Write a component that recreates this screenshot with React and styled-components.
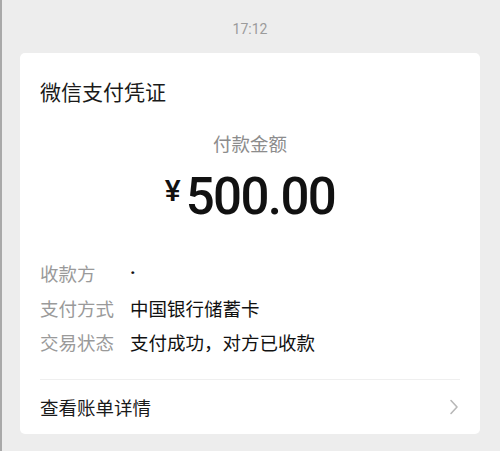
import React from "react";
import styled, { createGlobalStyle } from "styled-components";

const Global = createGlobalStyle`
  html, body { margin: 0; padding: 0; }
  body {
    background: #ededed;
    font-family: "Noto Sans CJK SC", "Noto Sans", sans-serif;
    width: 500px;
    height: 451px;
    overflow: hidden;
  }
`;

const Page = styled.div`
  width: 500px;
  height: 451px;
  box-sizing: border-box;
  border-left: 2px solid #a9a9a9;
  padding: 18px 20px 0 18px;
  display: flex;
  flex-direction: column;
`;

const Time = styled.div`
  text-align: center;
  color: #9b9b9b;
  font-family: Roboto, "Noto Sans", sans-serif;
  font-size: 14px;
  line-height: 22px;
  height: 22px;
  margin-bottom: 13px;
`;

const Card = styled.div`
  background: #fff;
  border-radius: 5px;
  padding: 23px 20px 0 20px;
  display: flex;
  flex-direction: column;
`;

const Title = styled.div`
  font-size: 21px;
  line-height: 30px;
  color: #1a1a1a;
`;

const AmountLabel = styled.div`
  text-align: center;
  color: #8c8c8c;
  font-size: 18.5px;
  line-height: 24px;
  margin-top: 25px;
`;

const Amount = styled.div`
  display: flex;
  justify-content: center;
  align-items: flex-start;
  margin-top: 12px;
  height: 60px;
  color: #111;
  font-family: Roboto, "Noto Sans", sans-serif;
`;

const Yen = styled.span`
  font-size: 30px;
  line-height: 30px;
  font-weight: 500;
  margin-top: 9px;
  margin-right: 5px;
`;

const Num = styled.span`
  font-size: 51px;
  line-height: 60px;
  font-weight: 500;
  letter-spacing: -1.6px;
`;

const Rows = styled.div`
  display: flex;
  flex-direction: column;
  margin-top: 33px;
  gap: 8.5px;
`;

const Row = styled.div`
  display: flex;
  font-size: 18.5px;
  line-height: 26px;
`;

const Label = styled.span`
  width: 90px;
  color: #9a9a9a;
  flex-shrink: 0;
`;

const Value = styled.span`
  color: #111;
`;

const Dot = styled.span`
  color: #111;
  font-family: Roboto, sans-serif;
  font-weight: 700;
`;

const Footer = styled.div`
  margin-top: 24px;
  border-top: 1px solid #efefef;
  height: 54px;
  display: flex;
  align-items: center;
  justify-content: space-between;
  font-size: 18.5px;
  color: #1a1a1a;
`;

const Chevron = styled.svg`
  width: 10px;
  height: 16px;
  margin-right: 1px;
`;

export default function App() {
  return (
    <>
      <Global />
      <Page>
        <Time>17:12</Time>
        <Card>
          <Title>微信支付凭证</Title>
          <AmountLabel>付款金额</AmountLabel>
          <Amount>
            <Yen>¥</Yen>
            <Num>500.00</Num>
          </Amount>
          <Rows>
            <Row>
              <Label>收款方</Label>
              <Dot>·</Dot>
            </Row>
            <Row>
              <Label>支付方式</Label>
              <Value>中国银行储蓄卡</Value>
            </Row>
            <Row>
              <Label>交易状态</Label>
              <Value>支付成功，对方已收款</Value>
            </Row>
          </Rows>
          <Footer>
            <span>查看账单详情</span>
            <Chevron viewBox="0 0 10 16">
              <path d="M2 1.5 L8 8 L2 14.5" fill="none" stroke="#b8b8b8" strokeWidth="1.6" strokeLinecap="round" strokeLinejoin="round" />
            </Chevron>
          </Footer>
        </Card>
      </Page>
    </>
  );
}
